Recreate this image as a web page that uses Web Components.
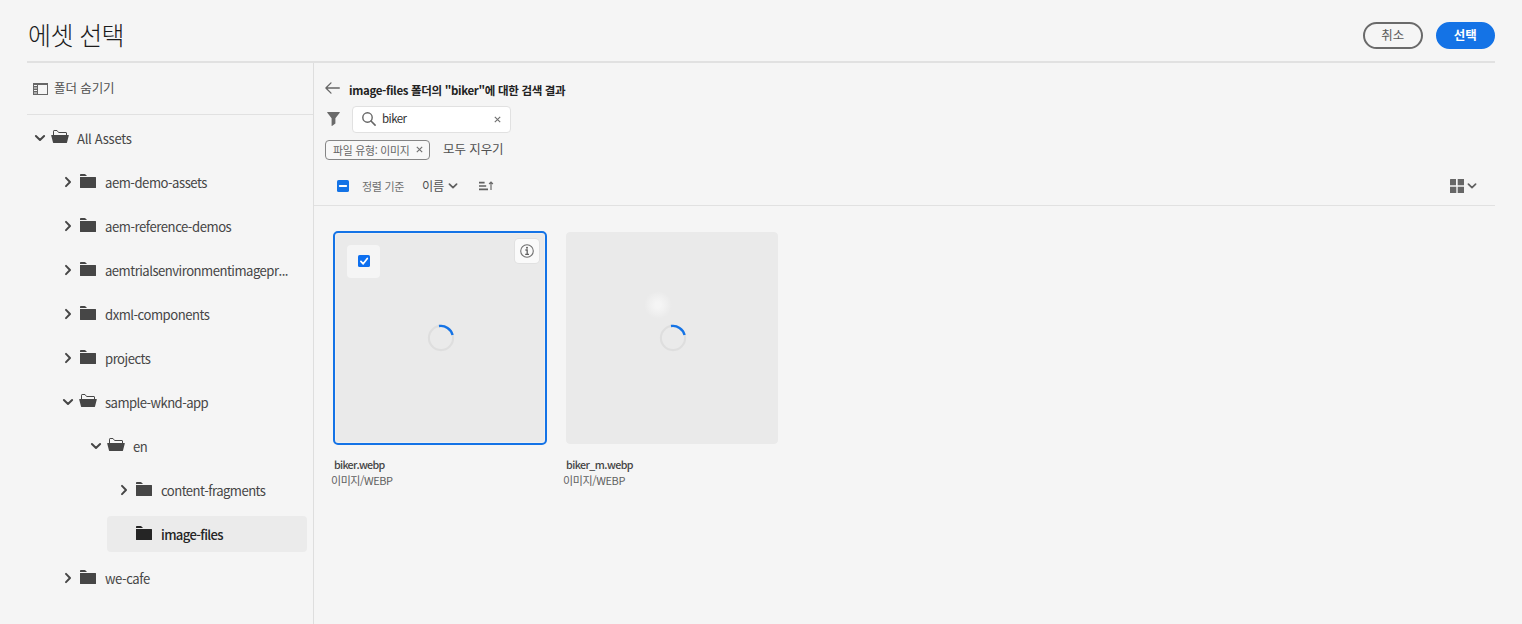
<!DOCTYPE html>
<html lang="ko">
<head>
<meta charset="utf-8">
<title>에셋 선택</title>
<style>
html,body{margin:0;height:100%;background:#f5f5f5;overflow:hidden}
body{font-family:"Noto Sans CJK KR","Noto Sans",sans-serif;color:#4b4b4b}
</style>
</head>
<body>
<asset-selector></asset-selector>
<script>
const define = (name, html, setup) => {
  const t = document.createElement('template');
  t.innerHTML = html;
  customElements.define(name, class extends HTMLElement {
    connectedCallback() {
      if (this.shadowRoot) return;
      this.attachShadow({mode: 'open'}).append(t.content.cloneNode(true));
      if (setup) setup(this, this.shadowRoot);
    }
  });
};

/* One line of text whose tracking adapts to the width in its "w" attribute. */
define('text-label', `<style>:host{display:block;flex:none;white-space:nowrap;line-height:20px}span{display:inline-block}</style><span><slot></slot></span>`,
  (el, root) => {
    const w = +el.getAttribute('w');
    if (!w) return;
    const span = root.querySelector('span');
    span.style.letterSpacing = ((w - span.getBoundingClientRect().width) / [...el.textContent].length).toFixed(3) + 'px';
    el.style.width = w + 'px';
  });

const icons = {
  down: [12, 8, '<path d="M1.9 2 6 6 10.1 2" fill="none" stroke="currentColor" stroke-width="2" stroke-linecap="round" stroke-linejoin="round"/>'],
  right: [8, 12, '<path d="M2 1.9 6 6 2 10.1" fill="none" stroke="currentColor" stroke-width="2" stroke-linecap="round" stroke-linejoin="round"/>'],
  caret: [10, 6, '<path d="M1.4 1.1 5 4.7 8.6 1.1" fill="none" stroke="#606060" stroke-width="1.7" stroke-linecap="round" stroke-linejoin="round"/>'],
  folder: [16, 14, '<path d="M0 2V.8Q0 0 .8 0H4.6Q5.2 0 5.6.5L7 2ZM0 3H15.5Q16 3 16 3.5V13.5Q16 14 15.5 14H.5Q0 14 0 13.5Z" fill="currentColor"/>'],
  open: [18, 14, '<path d="M2.5 5.5V1.2Q2.5.5 3.1.5H6L7.6 2.5H15Q15.5 2.5 15.5 3V5.5" fill="none" stroke="currentColor"/><path d="M.6 5H17.4Q18 5 17.8 5.6L16 12.4Q15.8 13 15.2 13H2.8Q2.2 13 2 12.4L.2 5.6Q0 5 .6 5Z" fill="currentColor"/>'],
  rail: [15, 12, '<path d="M0 0H15V12H0ZM5 2V11H14V2ZM1 2V3H4V2ZM1 4.5V5.5H4V4.5ZM1 7V8H4V7ZM1 9.5V10.5H4V9.5Z" fill="#666" fill-rule="evenodd"/>'],
  back: [15, 12, '<path d="M14.3 6H1M6 .9.9 6 6 11.1" fill="none" stroke="#666" stroke-width="1.3" stroke-linecap="round" stroke-linejoin="round"/>'],
  filter: [13, 14, '<path d="M.6 0H12.4Q13.2 0 12.7.7L8.4 6.2V11.5L5 14Q4.6 14 4.6 13.4V6.2L.3.7Q-.2 0 .6 0Z" fill="#6a6a6a"/>'],
  search: [14, 14, '<circle cx="5.5" cy="5.5" r="4.7" fill="none" stroke="#666" stroke-width="1.4"/><path d="M9 9 13.1 13.1" stroke="#666" stroke-width="1.6" stroke-linecap="round"/>'],
  cross: [7, 7, '<path d="M.8.8 6.2 6.2M6.2.8.8 6.2" stroke="#707070" stroke-width="1.15"/>'],
  sort: [14, 10, '<path d="M0 1.6H5.6M0 5H7.2M0 8.4H9" stroke="#606060" stroke-width="1.6"/><path d="M12 9V1.2M10.1 3 12 1.1 13.9 3" fill="none" stroke="#6a6a6a" stroke-width="1.2"/>'],
  grid: [14, 14, '<path d="M.5 0H6V6.3H0V.5ZM7.7 0H14V6.3H7.7ZM0 7.7H6.3V14H0ZM7.7 7.7H14V14H7.7Z" fill="#666"/>'],
  minus: [12, 12, '<rect width="12" height="12" rx="1.6" fill="#1473e6"/><path d="M2.8 6H9.2" stroke="#fff" stroke-width="1.9" stroke-linecap="round"/>'],
  check: [12, 12, '<rect width="12" height="12" rx="1.6" fill="#0d6fef"/><path d="M2.9 6.3 5.2 8.8 9.3 3.4" fill="none" stroke="#fff" stroke-width="1.7" stroke-linecap="round" stroke-linejoin="round"/>'],
  info: [14, 14, '<circle cx="7" cy="7" r="6.3" fill="none" stroke="#707070" stroke-width="1.1"/><path d="M5.4 6H7.2V10.2M5.2 10.3H9" fill="none" stroke="#606060" stroke-width="1.3"/><circle cx="7" cy="3.8" r="1" fill="#606060"/>'],
  spinner: [28, 28, '<circle cx="14" cy="14" r="12.1" fill="none" stroke="#dedede" stroke-width="2.1"/><path d="M12 2.05A12.1 12.1 0 0 1 25.6 11" fill="none" stroke="#1473e6" stroke-width="2.4"/>']
};
define('ui-icon', `<style>:host{display:block;flex:none;line-height:0}svg{display:block;overflow:visible}</style>`, (el, root) => {
  const [w, h, body] = icons[el.getAttribute('name')];
  root.innerHTML += `<svg width="${w}" height="${h}" viewBox="0 0 ${w} ${h}">${body}</svg>`;
});

define('pill-button', `<style>
:host{box-sizing:border-box;width:59.5px;height:27px;border:2px solid #6a6a6a;border-radius:14px;display:flex;justify-content:center;align-items:center;font-size:12.5px;color:#5a5a5a;padding:0 0 2px}
:host([primary]){background:#1473e6;border-color:#1473e6;color:#fff;font-weight:700}
</style><slot></slot>`);

define('tree-row', `<style>
:host{display:flex;align-items:center;height:36px;margin-bottom:8px;font-size:13.1px;box-sizing:border-box;color:#464646}
.arrow{width:12px;display:flex;justify-content:center}
.icon{width:18px;margin:0 8px 0 5px;display:flex;justify-content:center;padding-bottom:2px}
::slotted(text-label){padding-top:1px}
:host([selected]){background:#ebebeb;border-radius:4px;color:#252525;font-weight:500}
</style><div class="arrow"></div><div class="icon"></div><slot></slot>`, (el, root) => {
  const level = +el.getAttribute('level'), state = el.getAttribute('state');
  if (el.hasAttribute('selected')) { el.style.marginLeft = '80px'; el.style.paddingLeft = '11px'; el.style.width = '200px'; }
  else el.style.paddingLeft = 7 + 28 * level + 'px';
  root.querySelector('.icon').innerHTML = `<ui-icon name="${state === 'open' ? 'open' : 'folder'}"></ui-icon>`;
  if (state) root.querySelector('.arrow').innerHTML = `<ui-icon name="${state === 'open' ? 'down' : 'right'}"></ui-icon>`;
});

define('folder-panel', `<style>
:host{display:block;width:286px;border-right:1px solid #dedede;flex:none}
.toggle{height:51px;border-bottom:1px solid #e1e1e1;display:flex;align-items:center;padding-left:6px;gap:6px;font-size:12.5px;color:#505050}
.toggle text-label{margin-bottom:2px}
.tree{padding-top:5px}
</style>
<div class="toggle"><ui-icon name="rail"></ui-icon><text-label w="60.5">폴더 숨기기</text-label></div>
<div class="tree">
<tree-row level="0" state="open"><text-label w="54.5">All Assets</text-label></tree-row>
<tree-row level="1" state="closed"><text-label w="102">aem-demo-assets</text-label></tree-row>
<tree-row level="1" state="closed"><text-label w="126.3">aem-reference-demos</text-label></tree-row>
<tree-row level="1" state="closed"><text-label w="183">aemtrialsenvironmentimagepr...</text-label></tree-row>
<tree-row level="1" state="closed"><text-label w="104.4">dxml-components</text-label></tree-row>
<tree-row level="1" state="closed"><text-label w="45.4">projects</text-label></tree-row>
<tree-row level="1" state="open"><text-label w="103.2">sample-wknd-app</text-label></tree-row>
<tree-row level="2" state="open"><text-label w="14.2">en</text-label></tree-row>
<tree-row level="3" state="closed"><text-label w="104.4">content-fragments</text-label></tree-row>
<tree-row selected><text-label w="62">image-files</text-label></tree-row>
<tree-row level="1" state="closed"><text-label w="45">we-cafe</text-label></tree-row>
</div>`);

define('search-tools', `<style>
:host{display:block;height:142px;border-bottom:1px solid #e1e1e1}
.row{display:flex;align-items:center}
.head{height:43px;box-sizing:border-box;padding:10px 0 0 11px;gap:9px;font-size:11.5px;font-weight:700;color:#222}
.head ui-icon{margin-bottom:3px}
.find{height:26px;padding-left:13px;gap:12px}
.field{box-sizing:border-box;width:159px;height:27px;border:1px solid #e1e1e1;border-radius:4px;background:#fff;display:flex;align-items:center;padding:0 9px;font-size:11.5px;color:#333}
.field text-label{margin:0 auto 2px 6px}
.chips{height:21px;margin-top:7px;padding-left:11px;gap:13px;font-size:12.5px;color:#505050}
.chips>text-label{margin-bottom:1px}
.chip{box-sizing:border-box;width:105px;height:20px;border:1px solid #858585;border-radius:4px;display:flex;align-items:center;padding:0 6px 0 7px;justify-content:space-between;font-size:10.8px;color:#666;background:#f8f8f8}
.sort{height:45px;padding:6px 18px 0 23px;box-sizing:border-box;color:#505050;font-size:12.2px}
.by{margin:0 18px 0 13px;font-size:11px;color:#6e6e6e}
.sort .ar{margin:0 21px 0 4px}
.view{margin-left:auto;display:flex;align-items:center;gap:3px}
</style>
<div class="row head"><ui-icon name="back"></ui-icon><text-label w="216.3">image-files 폴더의 "biker"에 대한 검색 결과</text-label></div>
<div class="row find"><ui-icon name="filter"></ui-icon><div class="field"><ui-icon name="search"></ui-icon><text-label w="24.5">biker</text-label><ui-icon name="cross"></ui-icon></div></div>
<div class="row chips"><div class="chip"><text-label w="76.5">파일 유형: 이미지</text-label><ui-icon name="cross"></ui-icon></div><text-label w="60.5">모두 지우기</text-label></div>
<div class="row sort"><ui-icon name="minus"></ui-icon><text-label class="by" w="42">정렬 기준</text-label><text-label w="22">이름</text-label><ui-icon class="ar" name="caret"></ui-icon><ui-icon name="sort"></ui-icon><div class="view"><ui-icon name="grid"></ui-icon><ui-icon name="caret"></ui-icon></div></div>`);

define('asset-card', `<style>
:host{display:block;width:214px}
.thumb{position:relative;box-sizing:border-box;height:214px;border:1px solid #f5f5f5;border-radius:5px;background:#eaeaea;background-clip:padding-box;display:flex;align-items:center;justify-content:center}
:host([selected]) .thumb{border:2px solid #1473e6;box-shadow:inset 0 0 0 1px #f0f0f0}
.box,.info{display:none;position:absolute;align-items:center;justify-content:center;background:#f5f5f5;border-radius:4px}
:host([selected]) :is(.box,.info){display:flex}
.box{left:12px;top:12px;width:33px;height:33px}
.box ui-icon{margin:0 0 1px}
.info{right:6px;top:6px;width:24px;height:24px;background:#fafafa;box-shadow:0 0 0 1px #e1e1e1}
.thumb>ui-icon{margin-left:1px}
.glow{display:none;position:absolute;left:78px;top:59px;width:28px;height:28px;background:radial-gradient(circle,#f5f5f5 15%,#eaeaea00 70%)}
:host([glow]) .glow{display:block}
.name{font-size:10.7px;font-weight:500;color:#444;margin:10px 0 0 1px;line-height:20px}
.type{font-size:11px;color:#5f5f5f;margin:-5px 0 0 -2px;line-height:20px}
</style>
<div class="thumb"><div class="box"><ui-icon name="check"></ui-icon></div><div class="info"><ui-icon name="info"></ui-icon></div><div class="glow"></div><ui-icon name="spinner"></ui-icon></div>
<div class="name"><slot name="name"></slot></div><div class="type"><slot name="type"></slot></div>`);

define('asset-selector', `<style>
:host{display:flex;flex-direction:column;height:624px;padding:0 27px;box-sizing:border-box;overflow:hidden}
header{height:63px;box-sizing:border-box;border-bottom:2px solid #e1e1e1;display:flex;align-items:center;padding:9px 0 0;flex:none}
h1{margin:-2px auto 0 1px;font-size:25px;font-weight:300;color:#1c1c1c}
.actions{display:flex;gap:13px}
main{display:flex;flex:1;min-height:0}
section{flex:1;min-width:0}
.cards{display:flex;gap:18px;padding:25px 0 0 19px}
</style>
<header><h1><text-label w="96">에셋 선택</text-label></h1><div class="actions"><pill-button>취소</pill-button><pill-button primary>선택</pill-button></div></header>
<main><folder-panel></folder-panel><section><search-tools></search-tools>
<div class="cards">
<asset-card selected><text-label slot="name" w="50.5">biker.webp</text-label><text-label slot="type" w="61.5">이미지/WEBP</text-label></asset-card>
<asset-card glow><text-label slot="name" w="67">biker_m.webp</text-label><text-label slot="type" w="62">이미지/WEBP</text-label></asset-card>
</div></section></main>`);
</script>
</body>
</html>
